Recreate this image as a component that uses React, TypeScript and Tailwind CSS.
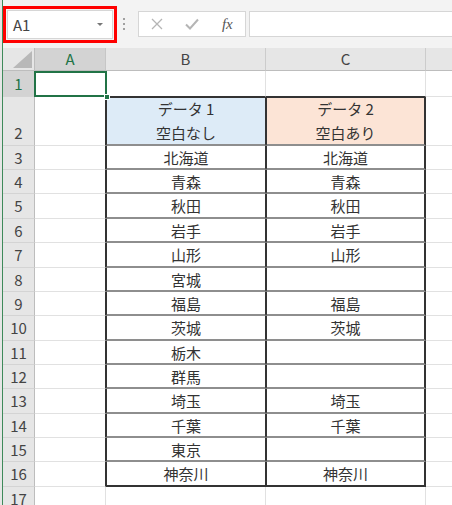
import React from 'react';

const rows: [string, string][] = [
  ['北海道', '北海道'],
  ['青森', '青森'],
  ['秋田', '秋田'],
  ['岩手', '岩手'],
  ['山形', '山形'],
  ['宮城', ''],
  ['福島', '福島'],
  ['茨城', '茨城'],
  ['栃木', ''],
  ['群馬', ''],
  ['埼玉', '埼玉'],
  ['千葉', '千葉'],
  ['東京', ''],
  ['神奈川', '神奈川']
];

const heights = [24, 24, 25, 24, 25, 24, 24, 25, 24, 24, 25, 24, 24, 25];

const font = "font-['Noto_Sans_CJK_JP','Liberation_Sans',sans-serif]";

function RowHeader({ n, active, bottom }: { n: number; active?: boolean; bottom?: boolean }) {
  return (
    <div
      className={`w-[32px] shrink-0 flex justify-center border-r border-b border-r-[#bdbdbd] border-b-[#d4d4d4] text-[15px] leading-[22px] ${
        bottom ? 'items-end pb-[1px]' : 'items-center'
      } ${active ? 'bg-[#d3d3d3] text-[#217346]' : 'bg-[#e6e6e6] text-[#444]'}`}
    >
      {n}
    </div>
  );
}

export default function App() {
  return (
    <div className={`w-[452px] h-[505px] overflow-hidden flex bg-white ${font}`}>
      <div className="w-[2px] bg-[#e6e6e6]" />
      <div className="w-[1px] bg-[#3f8a5a]" />

      <div className="flex-1 flex flex-col min-w-0">
        {/* Toolbar */}
        <div className="h-[48px] shrink-0 bg-[#f3f3f3] flex items-center">
          <div className="w-[114px] h-[37px] border-[3px] border-[#ff0000] p-[1px]">
            <div className="h-full bg-white border border-[#d6d6d6] flex items-center justify-between pl-[5px] pr-[9px]">
              <span className="text-[15px] text-[#444] leading-none">A1</span>
              <span className="w-0 h-0 border-l-[3px] border-r-[3px] border-t-[3px] border-l-transparent border-r-transparent border-t-[#777]" />
            </div>
          </div>
          <div className="ml-[6px] flex flex-col gap-[3px]">
            <span className="w-[2px] h-[2px] bg-[#a0a0a0]" />
            <span className="w-[2px] h-[2px] bg-[#a0a0a0]" />
            <span className="w-[2px] h-[2px] bg-[#a0a0a0]" />
          </div>
          <div className="ml-[13px] w-[108px] h-[26px] bg-white border border-[#d6d6d6] flex">
            <div className="w-[36px] flex items-center justify-center">
              <svg width="12" height="12" viewBox="0 0 12 12">
                <path d="M1 1L11 11M11 1L1 11" stroke="#b5b5b5" strokeWidth="1.3" fill="none" />
              </svg>
            </div>
            <div className="w-[36px] flex items-center justify-center">
              <svg width="14" height="12" viewBox="0 0 14 12">
                <path d="M1 6.5L5 10.5L13 1.5" stroke="#b5b5b5" strokeWidth="2" fill="none" />
              </svg>
            </div>
            <div className="w-[36px] flex items-center justify-center">
              <span className="font-['Liberation_Serif',serif] italic text-[15px] text-[#555] leading-none">fx</span>
            </div>
          </div>
          <div className="ml-[3px] flex-1 h-[26px] bg-white border border-r-0 border-[#d6d6d6]" />
        </div>

        {/* Sheet */}
        <div className="relative flex-1 flex flex-col">
          {/* Column headers */}
          <div className="h-[23px] shrink-0 flex text-[15px] text-[#444]">
            <div className="w-[32px] shrink-0 bg-[#e6e6e6] border-r border-b border-[#bdbdbd] flex items-end justify-end pr-[2px] pb-[2px]">
              <svg width="19" height="17" viewBox="0 0 19 17">
                <path d="M19 0L19 17L0 17Z" fill="#b8b8b8" />
              </svg>
            </div>
            <div className="w-[71px] shrink-0 bg-[#d3d3d3] text-[#217346] border-r border-b border-r-[#c6c6c6] border-b-[#bdbdbd] flex items-center justify-center">
              A
            </div>
            <div className="w-[160px] shrink-0 bg-[#e6e6e6] border-r border-b border-r-[#cccccc] border-b-[#bdbdbd] flex items-center justify-center">
              B
            </div>
            <div className="w-[160px] shrink-0 bg-[#e6e6e6] border-r border-b border-r-[#cccccc] border-b-[#bdbdbd] flex items-center justify-center">
              C
            </div>
            <div className="flex-1 bg-[#e6e6e6] border-b border-[#bdbdbd]" />
          </div>

          {/* Row 1 */}
          <div className="h-[26px] shrink-0 flex">
            <RowHeader n={1} active />
            <div className="w-[71px] shrink-0 border-r border-b border-[#e1e1e1]" />
            <div className="w-[160px] shrink-0 border-r border-r-[#e1e1e1] border-b border-b-[#333]" />
            <div className="w-[160px] shrink-0 border-r border-r-[#e1e1e1] border-b border-b-[#333]" />
            <div className="flex-1 border-b border-[#e1e1e1]" />
          </div>

          {/* Row 2 */}
          <div className="h-[49px] shrink-0 flex text-[15px] text-[#333]">
            <RowHeader n={2} bottom />
            <div className="w-[71px] shrink-0 border-r border-b border-r-[#333] border-b-[#e1e1e1]" />
            <div className="w-[160px] shrink-0 bg-[#ddebf7] border-l border-r border-t border-l-[#333] border-r-[#333] border-t-[#333] border-b-2 border-b-[#8e8e8e] flex flex-col items-center justify-center leading-[24px]">
              <span>データ 1</span>
              <span>空白なし</span>
            </div>
            <div className="w-[160px] shrink-0 bg-[#fce4d6] border-l border-t border-l-[#333] border-t-[#333] border-r-2 border-r-[#333] border-b-2 border-b-[#8e8e8e] flex flex-col items-center justify-center leading-[24px]">
              <span>データ 2</span>
              <span>空白あり</span>
            </div>
            <div className="flex-1 border-b border-[#e1e1e1]" />
          </div>

          {/* Data rows */}
          {rows.map(([b, c], i) => {
            const last = i === rows.length - 1;
            const bottom = last ? 'border-b-2 border-b-[#333]' : 'border-b-2 border-b-[#8e8e8e]';
            return (
              <div
                key={i}
                className={`${heights[i] === 25 ? 'h-[25px]' : 'h-[24px]'} shrink-0 flex text-[15px] text-[#333] leading-none`}
              >
                <RowHeader n={i + 3} />
                <div className="w-[71px] shrink-0 border-r border-b border-r-[#333] border-b-[#e1e1e1]" />
                <div className={`w-[160px] shrink-0 border-l border-r border-l-[#333] border-r-[#333] ${bottom} flex items-center justify-center`}>
                  {b}
                </div>
                <div className={`w-[160px] shrink-0 border-l border-l-[#333] border-r-2 border-r-[#333] ${bottom} flex items-center justify-center`}>
                  {c}
                </div>
                <div className="flex-1 border-b border-[#e1e1e1]" />
              </div>
            );
          })}

          {/* Row 17 */}
          <div className="h-[24px] shrink-0 flex">
            <RowHeader n={17} />
            <div className="w-[71px] shrink-0 border-r border-b border-[#e1e1e1]" />
            <div className="w-[160px] shrink-0 border-r border-b border-[#e1e1e1]" />
            <div className="w-[160px] shrink-0 border-r border-b border-[#e1e1e1]" />
            <div className="flex-1 border-b border-[#e1e1e1]" />
          </div>

          {/* Selection A1 */}
          <div className="absolute left-[31px] top-[23px] w-[73px] h-[26px] border-2 border-[#217346] pointer-events-none" />
          <div className="absolute left-[101px] top-[46px] w-[6px] h-[6px] bg-[#217346] border border-white" />
        </div>
      </div>
    </div>
  );
}
